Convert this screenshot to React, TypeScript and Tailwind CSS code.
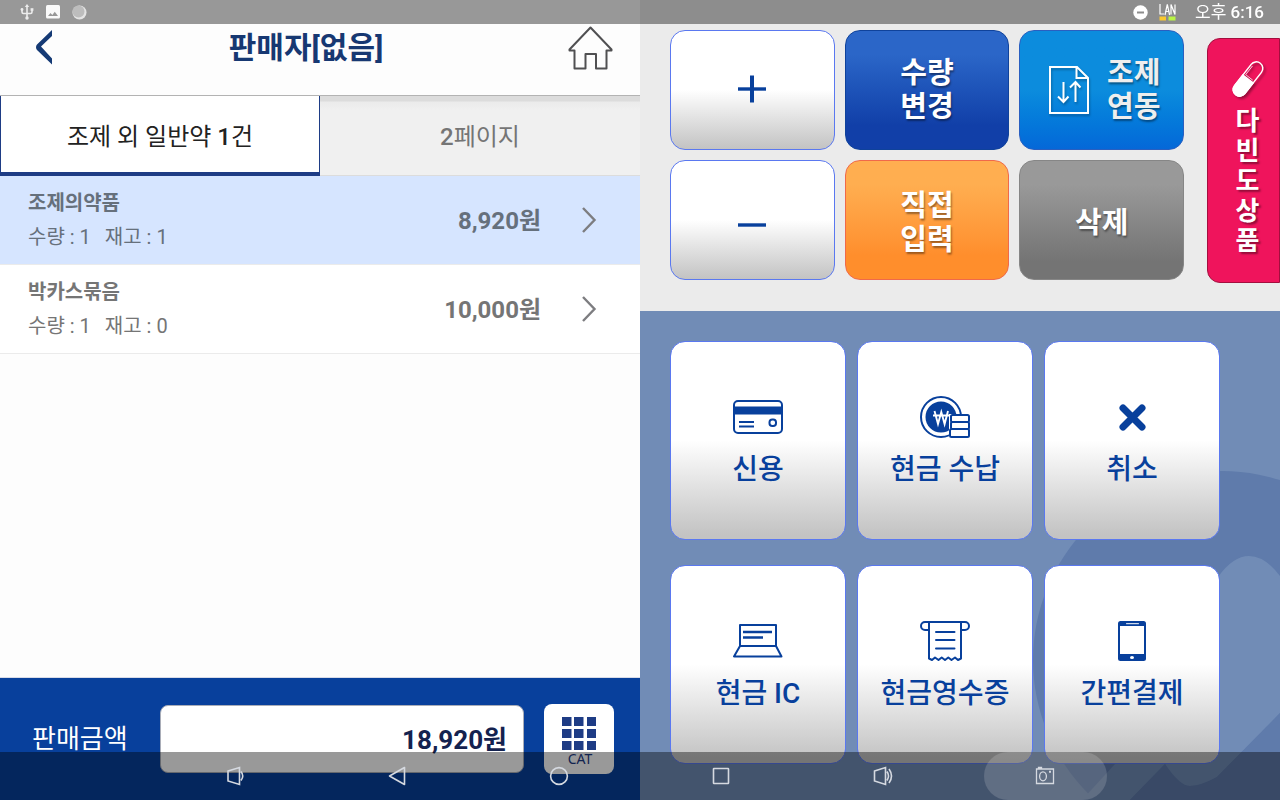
import type { ReactNode } from "react";

type Item = { name: string; qty: number; stock: number; price: string; active?: boolean };

const items: Item[] = [
  { name: "조제의약품", qty: 1, stock: 1, price: "8,920원", active: true },
  { name: "박카스묶음", qty: 1, stock: 0, price: "10,000원" },
];

const NAVY = "#08409c";

function StatusBar() {
  return (
    <div className="fixed inset-x-0 top-0 z-20 flex h-6 items-center justify-between bg-black/40 pl-5 pr-4 text-white">
      <div className="flex items-center gap-3">
        <svg width="14" height="16" viewBox="0 0 14 16" fill="none" stroke="#ececec" strokeWidth="1.6">
          <path d="M7 2v12M2 5.500v2.500q0 1.500 1.500 1.500H10.500q1.500 0 1.500-1.500V5.500" />
          <path d="M7 0l2.200 3H4.800z" fill="#ececec" stroke="none" />
          <circle cx="7" cy="14" r="1.700" fill="#ececec" stroke="none" />
          <circle cx="2" cy="5.500" r="1.400" fill="#ececec" stroke="none" />
          <path d="M10.600 4.200h2.800v2.600h-2.800z" fill="#ececec" stroke="none" />
        </svg>
        <svg width="14" height="14" viewBox="0 0 14 14">
          <rect width="14" height="13.500" rx="1.500" fill="#fafafa" />
          <path d="M2 11l2.500-3 1.800 2 2.500-3.200L12 11z" fill="#989898" />
        </svg>
        <svg width="15" height="15" viewBox="0 0 15 15">
          <circle cx="7.500" cy="7.500" r="7" fill="#e4e4e4" />
          <circle cx="6.500" cy="6.500" r="6" fill="#bdbdbd" />
        </svg>
      </div>
      <div className="flex items-center">
        <svg className="mr-[11px]" width="15" height="15" viewBox="0 0 15 15">
          <circle cx="7.500" cy="7.500" r="7.200" fill="#fff" />
          <path d="M4 7.500h7" stroke="#8d8d8d" strokeWidth="2" />
        </svg>
        <svg className="mr-[19px]" width="17" height="17" viewBox="0 0 17 17" fill="none">
          <path d="M1 0v10h4M6 11l2.300-10.500L10.600 11M6.800 7.500h3M12 10.500V.5l4 10V.5" stroke="#fff" strokeWidth="1.200" />
          <path d="M0.500 12.500h6.500v4H.5z" fill="#fbc92d" />
          <path d="M9.500 12.500h7v4h-7z" fill="#b9f545" />
        </svg>
        <span className="text-[17px] leading-6">
          오후 <span className="font-medium">6:16</span>
        </span>
      </div>
    </div>
  );
}

function NavBar() {
  const cell = "flex h-12 w-[162px] items-center justify-center";
  const stroke = { fill: "none", stroke: "#d5d9e0", strokeWidth: 1.6 };
  return (
    <nav className="fixed inset-x-0 bottom-0 z-20 flex h-12 justify-center bg-black/40">
      <button aria-label="볼륨 낮추기" className={cell}>
        <svg width="20" height="20" viewBox="0 0 20 20" {...stroke}>
          <path d="M3 5L14.500 1.500V18.500L3 15zM16 5.500q3.500 4.500 0 9" />
        </svg>
      </button>
      <button aria-label="뒤로" className={cell}>
        <svg width="18" height="20" viewBox="0 0 18 20" {...stroke}>
          <path d="M16.500 1.500v17L1.500 10z" strokeLinejoin="round" />
        </svg>
      </button>
      <button aria-label="홈" className={cell}>
        <svg width="20" height="20" viewBox="0 0 20 20" {...stroke}>
          <circle cx="10" cy="10" r="8.400" />
        </svg>
      </button>
      <button aria-label="최근 앱" className={cell}>
        <svg width="18" height="18" viewBox="0 0 18 18" {...stroke}>
          <rect x="1.500" y="1.500" width="15" height="15" rx=".5" />
        </svg>
      </button>
      <button aria-label="볼륨 높이기" className={cell}>
        <svg width="20" height="20" viewBox="0 0 20 20" {...stroke}>
          <path d="M1.500 5L12.500 1.500V18.500L1.500 15zM14 5.500q3 4.500 0 9M16 3q5 7 0 14" />
        </svg>
      </button>
      <button aria-label="화면 캡처" className={cell}>
        <span className="flex h-12 w-[123px] items-center justify-center rounded-full bg-white/15">
          <svg width="20" height="20" viewBox="0 0 20 20" {...stroke} strokeWidth={1.3}>
            <path d="M1.500 3h17v14.500h-17zM3.500 3V1.500h3V3" />
            <ellipse cx="8" cy="10.300" rx="3.400" ry="4.500" />
            <path d="M14 5.800h2" strokeWidth="2" />
          </svg>
        </span>
      </button>
    </nav>
  );
}

function ItemRow({ item }: { item: Item }) {
  return (
    <li>
      <button
        className={
          "flex h-[89px] w-full items-center border-b border-[#ebebeb] pl-7 pr-[43px] text-left " +
          (item.active ? "bg-[#d6e5ff] text-[#66707c]" : "bg-white text-[#757575]")
        }
      >
        <span className="flex-1 text-[20px] leading-[34px]">
          <span className="block font-bold">{item.name}</span>
          <span className="flex gap-[14px]">
            <span>수량 : {item.qty}</span>
            <span>재고 : {item.stock}</span>
          </span>
        </span>
        <span className="mr-10 pt-0.5 text-[24px] leading-8 font-bold">{item.price}</span>
        <svg width="16" height="26" viewBox="0 0 16 26" fill="none" stroke="#7d7d80" strokeWidth="2.400">
          <path d="M2 1l11.500 12L2 25" />
        </svg>
      </button>
    </li>
  );
}

function PayButton({ label, children }: { label: string; children: ReactNode }) {
  return (
    <button className="flex h-[199px] flex-col items-center rounded-[15px] border border-[#5a78f0] bg-linear-to-b from-white from-50% to-[#c3c3c3] to-98% pt-[51px] text-[#08409c]">
      <span className="flex h-12 items-center">{children}</span>
      <span className="mt-[11px] text-[28px] leading-9 font-medium">{label}</span>
    </button>
  );
}

const keyBase = "flex h-[120px] items-center justify-center rounded-[15px] border text-[29px] leading-[34px] font-bold ";
const keyWhite = "border-[#5a78f0] bg-linear-to-b from-white from-50% to-[#c3c3c3]";
const shadow = "[text-shadow:1px_2px_2px_rgba(0,0,0,0.4)]";

export default function App() {
  return (
    <div className="min-h-screen bg-[#fdfdfd] font-[Roboto,'Noto_Sans_CJK_KR',sans-serif]">
      <StatusBar />
      <div className="grid min-h-screen grid-cols-2">
        <main className="flex flex-col">
          <header className="flex h-24 items-center border-b border-[#b3b3b3] pl-9 pr-[27px]">
            <button aria-label="뒤로 가기">
              <svg width="16" height="36" viewBox="0 0 16 36">
                <path d="M16 0v6L5 16.500 16 28.500v6L1 20Q-1 17 1 14.500z" fill="#153a75" />
              </svg>
            </button>
            <h1 className="flex-1 text-center text-[30px] leading-10 font-bold text-[#173872]">판매자[없음]</h1>
            <button aria-label="홈으로" className="flex w-[53px] justify-end">
              <svg width="45" height="44" viewBox="0 0 45 44" fill="none" stroke="#505052" strokeWidth="2" strokeLinejoin="round">
                <path d="M22.500 1.500L1.500 23.500V24.500H6.500V42.500H17.500V28H28V42.500H38.500V24.500H43.500V23.500z" />
              </svg>
            </button>
          </header>
          <div role="tablist" className="grid h-20 grid-cols-2 text-[24px] leading-8">
            <button role="tab" aria-selected="true" className="border-x border-b-4 border-[#1e3c85] bg-white pt-1.5 text-[#222]">
              조제 외 일반약 <span className="font-medium">1</span>건
            </button>
            <button
              role="tab"
              aria-selected="false"
              className="border-b border-[#dcdcdc] bg-[linear-gradient(#dcdcdc_5px,#ebebeb_6px,#f0f0f0_14px)] pt-0.5 text-[#757575]"
            >
              <span className="font-medium">2</span>페이지
            </button>
          </div>
          <ul className="flex-1">
            {items.map((item) => (
              <ItemRow key={item.name} item={item} />
            ))}
          </ul>
          <footer className="flex h-[123px] items-start border-t border-[#d9dce8] bg-[#08409c] pl-8 pr-[26px] pt-[26px]">
            <label htmlFor="total" className="flex h-[70px] w-32 items-center text-[26px] text-white">
              판매금액
            </label>
            <input
              id="total"
              readOnly
              value="18,920원"
              className="mt-px h-[68px] min-w-0 flex-1 rounded-lg border border-[#a9adb8] bg-white px-4 pb-1 text-right text-[26px] font-bold text-[#14224f]"
            />
            <button className="ml-5 flex h-[70px] w-[70px] flex-col items-center rounded-lg bg-white pt-[13px]">
              <svg width="34" height="33" viewBox="0 0 34 33" fill="#1e3c85">
                {[0, 12, 24].map((y) =>
                  [0, 12, 25].map((x) => <rect key={`${x}-${y}`} x={x} y={y} width="9.500" height="9" />),
                )}
              </svg>
              <span className="mt-px pl-0.5 font-['Noto_Sans'] text-[14px] leading-4 text-[#1e3c85]">CAT</span>
            </button>
          </footer>
        </main>

        <aside className="flex flex-col">
          <section className="flex h-[311px] items-start bg-[#ebebeb] pl-[30px] pt-[30px]">
            <div className="grid flex-1 grid-cols-3 gap-[10px] text-white">
              <button aria-label="수량 증가" className={keyBase + keyWhite}>
                <svg className="mb-0.5" width="28" height="28" viewBox="0 0 28 28" stroke={NAVY} strokeWidth="4">
                  <path d="M14 .5v27" />
                  <path d="M0 14h28" strokeWidth="3.400" />
                </svg>
              </button>
              <button className={keyBase + shadow + " border-[#0f429b] bg-linear-to-b from-[#2b66c8] from-20% to-[#113fa8] to-80%"}>
                수량
                <br />
                변경
              </button>
              <button className={keyBase + shadow + " gap-[18px] border-[#2a5fc0] bg-linear-to-b from-[#0c8cdd] from-50% to-[#0568d8] pl-[6px] text-[#eeeeee]"}>
                <svg
                  className="drop-shadow-[1px_2px_1px_rgba(0,0,0,0.25)]"
                  width="40"
                  height="48"
                  viewBox="0 0 40 48"
                  fill="none"
                  stroke="#fff"
                  strokeWidth="2"
                >
                  <path d="M1 1H28L39 12V47H1zM27.500 1V12H39" />
                  <path d="M14.500 16V35.500M9 30.500l5.500 5.500 5-5.500M26.500 36V16.500M21 21.500l5.500-5.500 5 5.500" />
                </svg>
                <span>
                  조제
                  <br />
                  연동
                </span>
              </button>
              <button aria-label="수량 감소" className={keyBase + keyWhite}>
                <svg className="mt-[10px]" width="28" height="28" viewBox="0 0 28 28" stroke={NAVY} strokeWidth="3.400">
                  <path d="M0 14h28" />
                </svg>
              </button>
              <button className={keyBase + shadow + " border-[#f0694a] bg-linear-to-b from-[#ffae50] from-20% to-[#ff8e2c] to-80% pt-1.5"}>
                직접
                <br />
                입력
              </button>
              <button className={keyBase + shadow + " border-[#868686] bg-linear-to-b from-[#999] from-20% to-[#747474] to-85% pt-1.5"}>
                삭제
              </button>
            </div>
            <button className="ml-[23px] mt-2 flex h-[245px] w-[73px] flex-col items-center rounded-l-[13px] border border-[#a30e3e] bg-[#ef145c] pl-2 pt-[21px] text-white">
              <svg className="drop-shadow-[2px_2px_1px_rgba(0,0,0,0.35)]" width="32" height="38" viewBox="0 0 32 38">
                <g transform="rotate(38 16 19)" fill="none" stroke="#fff" strokeWidth="1.500">
                  <rect x="9.500" y="-1" width="13" height="40" rx="6.500" />
                  <path d="M9.500 19h13v13.500a6.500 6.500 0 0 1-13 0z" fill="#fff" />
                  <path d="M11.500 17V6M11.500 17h9" strokeWidth=".7" />
                </g>
              </svg>
              <span className="mt-2 w-[26px] text-center text-[26px] leading-[30px] font-bold break-all [text-shadow:2px_2px_2px_rgba(0,0,0,0.4)]">
                다빈도상품
              </span>
            </button>
          </section>

          <section className="relative flex-1 overflow-hidden bg-[#718cb6] pb-9 pl-[30px] pr-[60px] pt-[30px]">
            <svg className="absolute right-0 top-0" width="640" height="489" viewBox="640 311 640 489" aria-hidden="true">
              <circle cx="1222" cy="660" r="189" fill="#5f7bab" />
              <g fill="#718cb6">
                <path d="M1280 576Q1265 556 1249 556T1218 577L1100 700L1165 764Q1180 786 1190 786T1217 777L1280 713z" />
                <path d="M1115 764H1165L1130 800H1082z" />
              </g>
              <path d="M1280 713L1217 777Q1203 786 1190 786T1165 764L1130 800H1280z" fill="#5f7bab" />
            </svg>
            <div className="relative grid grid-cols-3 gap-x-[11px] gap-y-[25px]">
              <PayButton label="신용">
                <svg width="50" height="34" viewBox="0 0 50 34" fill="none" stroke={NAVY} strokeWidth="2">
                  <rect x="1" y="1" width="48" height="32" rx="4" />
                  <path d="M1 6.500h48v8H1z" fill={NAVY} stroke="none" />
                  <path d="M6 22h15M6 26.500h15" />
                  <rect x="36.500" y="19.500" width="6.500" height="6.500" rx="2.800" />
                </svg>
              </PayButton>
              <PayButton label="현금 수납">
                <svg width="50" height="42" viewBox="0 0 50 42" fill="none" stroke={NAVY} strokeWidth="2">
                  <circle cx="21" cy="21" r="20" />
                  <circle cx="21" cy="21" r="15.500" fill={NAVY} stroke="none" />
                  <path d="M14.500 15l3.500 13 3.300-12 3.300 12L28 15M13 19.500h16.500" stroke="#fff" strokeWidth="1.900" />
                  <path d="M29 18H50V42H29z" fill="#fff" stroke="none" />
                  <rect x="31" y="19" width="18" height="7" rx="1.500" />
                  <rect x="31" y="26" width="18" height="7" rx="1.500" />
                  <rect x="30" y="33" width="19" height="8" rx="1.500" />
                </svg>
              </PayButton>
              <PayButton label="취소">
                <svg width="27" height="27" viewBox="0 0 27 27" stroke={NAVY} strokeWidth="7" strokeLinecap="round">
                  <path d="M4 4l19 19M23 4L4 23" />
                </svg>
              </PayButton>
              <PayButton label="현금 IC">
                <svg width="50" height="34" viewBox="0 0 50 34" fill="none" stroke={NAVY} strokeWidth="2" strokeLinejoin="round">
                  <path d="M7 22V1H43V22zM7 22L1 32.500H48.500L43 22" />
                  <path d="M10 8h29M10 13.500h20" strokeWidth="2.400" />
                </svg>
              </PayButton>
              <PayButton label="현금영수증">
                <svg width="50" height="40" viewBox="0 0 50 40" fill="none" stroke={NAVY} strokeWidth="2" strokeLinecap="round" strokeLinejoin="round">
                  <path d="M9 9H5a4 4 0 0 1 0-8H45a4 4 0 0 1 0 8H41M9 2V37.500l3 1.500 3-2.500 3.500 2.500 3.200-2.500L25 39l3.300-2.500 3.200 2.500 3.500-2.500 3 2.500 3-1.500V2" />
                  <path d="M16 11h18.500M16 19h18.500M16 27.500h18.500" />
                </svg>
              </PayButton>
              <PayButton label="간편결제">
                <svg width="28" height="40" viewBox="0 0 28 40">
                  <rect width="28" height="40" rx="2.500" fill={NAVY} />
                  <path d="M2 5h24v28H2z" fill="#fff" />
                  <path d="M8.500 2.700h12" stroke="#fff" strokeWidth="1" strokeLinecap="round" />
                  <ellipse cx="14" cy="36.500" rx="2" ry="1.600" fill="#fff" />
                </svg>
              </PayButton>
            </div>
          </section>
        </aside>
      </div>
      <NavBar />
    </div>
  );
}
